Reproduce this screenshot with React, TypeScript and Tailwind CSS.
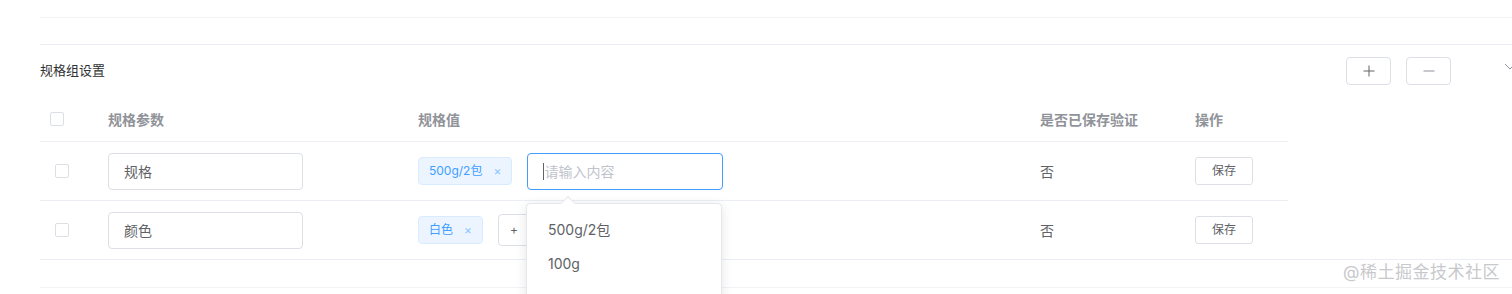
import { useState } from "react";

const font = "font-['Inter','Noto_Sans_CJK_SC',sans-serif]";

const rows = [
  { name: "规格", tags: ["500g/2包"], editing: true },
  { name: "颜色", tags: ["白色"], editing: false },
];

const Checkbox = ({ className = "" }: { className?: string }) => (
  <span className={`block w-[14px] h-[14px] rounded-[2px] border border-[#dcdfe6] bg-white ${className}`} />
);

const Tag = ({ label }: { label: string }) => (
  <span className="inline-flex items-center h-[28px] px-[10px] gap-[11px] rounded-[4px] border border-[#d9ecff] bg-[#ecf5ff] text-[12px] text-[#409eff]">
    {label}
    <span className="text-[12px] leading-none text-[#8cc5ff]">×</span>
  </span>
);

export default function App() {
  const [value, setValue] = useState("");

  return (
    <div className={`relative w-[1512px] h-[294px] overflow-hidden bg-white text-[#606266] ${font}`}>
      {/* top dividers */}
      <div className="ml-[40px] h-[18px] border-b border-[#f2f3f5]" />
      <div className="ml-[40px] h-[27px] border-b border-[#ebeef5]" />

      {/* section head */}
      <div className="ml-[40px] flex items-center h-[52px]">
        <span className="text-[13px] text-[#303133]">规格组设置</span>
        <div className="ml-auto flex items-center gap-[15px] mr-[61px]">
          <button className="w-[45px] h-[28px] rounded-[4px] border border-[#dcdfe6] flex items-center justify-center text-[#606266]">
            <svg width="12" height="12" viewBox="0 0 12 12" fill="none" stroke="#606266" strokeWidth="1">
              <path d="M6 0.5V11.5M0.5 6H11.5" />
            </svg>
          </button>
          <button className="w-[45px] h-[28px] rounded-[4px] border border-[#dcdfe6] flex items-center justify-center">
            <svg width="12" height="12" viewBox="0 0 12 12" fill="none" stroke="#909399" strokeWidth="1">
              <path d="M0.5 6H11.5" />
            </svg>
          </button>
        </div>
        <svg className="absolute right-[-4px] top-[63px]" width="12" height="8" viewBox="0 0 12 8" fill="none" stroke="#909399" strokeWidth="1">
          <path d="M1 1L6 6L11 1" />
        </svg>
      </div>

      {/* table */}
      <div className="ml-[40px] w-[1248px]">
        <div className="grid grid-cols-[56px_310px_622px_155px_105px] h-[45px] items-center border-b border-[#ebeef5] text-[14px] font-bold text-[#909399]">
          <div className="pl-[10px]"><Checkbox /></div>
          <div className="pl-[12px]">规格参数</div>
          <div className="pl-[12px]">规格值</div>
          <div className="pl-[12px]">是否已保存验证</div>
          <div className="pl-[12px]">操作</div>
        </div>

        {rows.map((r) => (
          <div
            key={r.name}
            className="grid grid-cols-[56px_310px_622px_155px_105px] h-[59px] items-center border-b border-[#ebeef5] text-[14px]"
          >
            <div className="pl-[15px]"><Checkbox /></div>
            <div className="pl-[12px]">
              <div className="w-[195px] h-[37px] rounded-[4px] border border-[#dcdfe6] flex items-center pl-[15px] text-[#606266]">
                {r.name}
              </div>
            </div>
            <div className="pl-[12px] flex items-center gap-[15px]">
              {r.tags.map((t) => (
                <Tag key={t} label={t} />
              ))}
              {r.editing ? (
                <div className="relative">
                  <input
                    value={value}
                    onChange={(e) => setValue(e.target.value)}
                    placeholder="请输入内容"
                    className="w-[196px] h-[37px] rounded-[4px] border border-[#409eff] outline-none pl-[16px] text-[14px] placeholder:text-[#c0c4cc] caret-[#606266]"
                  />
                  <span className="absolute left-[16px] top-[10px] w-px h-[17px] bg-[#606266]" />
                </div>
              ) : (
                <button className="h-[32px] w-[90px] rounded-[4px] border border-[#dcdfe6] text-[12px] text-[#606266] text-left pl-[11px]">
                  +
                </button>
              )}
            </div>
            <div className="pl-[12px]">否</div>
            <div className="pl-[12px]">
              <button className="w-[58px] h-[28px] rounded-[3px] border border-[#dcdfe6] text-[12px] text-[#606266]">
                保存
              </button>
            </div>
          </div>
        ))}
      </div>

      {/* full-width dividers below table */}
      <div className="ml-[40px] -mt-px border-b border-[#ebeef5]" />
      <div className="ml-[40px] h-[28px] border-b border-[#f2f3f5]" />

      {/* autocomplete dropdown */}
      <div className="absolute left-[526px] top-[203px] w-[196px] h-[100px] bg-white border border-[#e4e7ed] rounded-[4px] shadow-[0_2px_12px_0_rgba(0,0,0,0.1)] text-[14px] text-[#606266]">
        <span className="absolute -top-[6px] left-[36px] w-[10px] h-[10px] rotate-45 bg-white border-l border-t border-[#e4e7ed]" />
        <ul className="pt-[9px]">
          <li className="h-[34px] leading-[34px] pl-[21px]">500g/2包</li>
          <li className="h-[34px] leading-[34px] pl-[21px]">100g</li>
        </ul>
      </div>

      {/* watermark */}
      <span className="absolute right-[12px] top-[260px] text-[17px] text-[#c8c9cc] tracking-[0.5px]">@稀土掘金技术社区</span>
    </div>
  );
}
